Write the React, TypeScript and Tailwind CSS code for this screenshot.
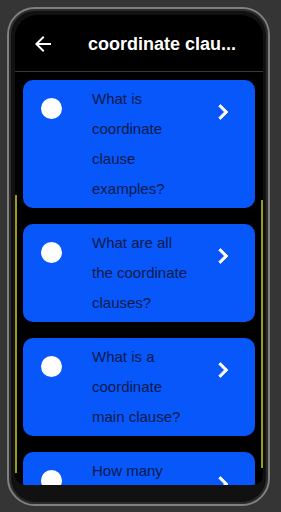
import React from "react";

const items: string[][] = [
  ["What is", "coordinate", "clause", "examples?"],
  ["What are all", "the coordinate", "clauses?"],
  ["What is a", "coordinate", "main clause?"],
  ["How many", "clauses?"],
];

function Card({ lines }: { lines: string[] }) {
  return (
    <div className="flex shrink-0 rounded-[10px] bg-[#0757fb] py-[4px]">
      <div className="w-[69px] shrink-0 pl-[18px] pt-[14px]">
        <div className="h-[21px] w-[21px] rounded-full bg-white" />
      </div>
      <div
        className="w-[116px] shrink-0 text-[15px] leading-[30px] text-[#0a1a48]"
        style={{ fontFamily: '"Liberation Sans", Arial, sans-serif' }}
      >
        {lines.map((l, i) => (
          <div key={i} className="whitespace-nowrap">
            {l}
          </div>
        ))}
      </div>
      <div className="shrink-0 pt-[13px]">
        <svg width="30" height="30" viewBox="0 0 24 24" fill="white">
          <path d="M10 6L8.59 7.41 13.17 12l-4.58 4.59L10 18l6-6z" stroke="white" strokeWidth="0.6" />
        </svg>
      </div>
    </div>
  );
}

export default function App() {
  return (
    <div className="h-[512px] w-[281px] overflow-hidden bg-[#353535] pl-[7px] pt-[7px]">
      <div className="h-[499px] w-[263px] rounded-[28px] border-2 border-[#808080] bg-[#111111] p-[6px] shadow-[inset_0_0_0_2px_#2c2c2c]">
        <div className="relative flex h-[470px] w-[248px] flex-col overflow-hidden rounded-b-[10px] rounded-t-[22px] bg-black">
          <div className="flex h-[57px] shrink-0 items-center border-b border-[#3a3a3a] pt-[2px]">
            <div className="pl-[16px]">
              <svg width="24" height="24" viewBox="0 0 24 24" fill="white">
                <path d="M20 11H7.83l5.59-5.59L12 4l-8 8 8 8 1.41-1.41L7.83 13H20v-2z" />
              </svg>
            </div>
            <div
              className="ml-[33px] whitespace-nowrap text-[18px] font-bold text-white"
              style={{ fontFamily: '"Liberation Sans", Arial, sans-serif' }}
            >
              coordinate clau...
            </div>
          </div>
          <div className="flex flex-1 flex-col gap-[16px] overflow-hidden px-[8px] pt-[8px]">
            {items.map((l, i) => (
              <Card key={i} lines={l} />
            ))}
          </div>
          <div className="absolute left-0 top-[180px] h-[278px] w-[2px] bg-[#9a9a1c]" />
          <div className="absolute right-0 top-[185px] h-[268px] w-[2px] bg-[#9a9a1c]" />
        </div>
      </div>
    </div>
  );
}
